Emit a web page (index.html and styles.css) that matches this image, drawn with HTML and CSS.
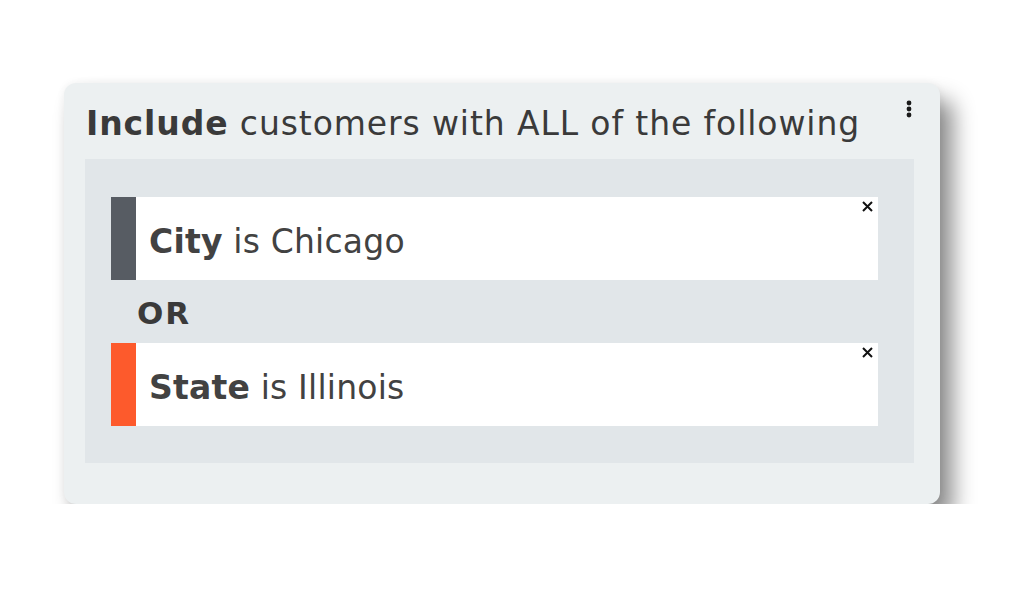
FILE: index.html
```html
<!DOCTYPE html>
<html lang="en">
<head>
    <meta charset="UTF-8">
    <title>Segment Rules</title>
    <link rel="stylesheet" href="styles.css">
</head>
<body>
    <div class="card">
        <div class="card-head">
            <h1 class="title"><b>Include</b> customers with ALL of the following</h1>
            <span class="menu-btn">
                <svg width="6" height="18" viewBox="0 0 6 18"><circle cx="3" cy="3" r="2.4"/><circle cx="3" cy="9" r="2.4"/><circle cx="3" cy="15" r="2.4"/></svg>
            </span>
        </div>

        <div class="group">
            <div class="rule">
                <span class="bar bar-city"></span>
                <p class="rule-text"><b>City</b> is Chicago</p>
                <span class="remove">
                    <svg width="13" height="13" viewBox="0 0 13 13"><path d="M2 2 L11 11 M11 2 L2 11"/></svg>
                </span>
            </div>

            <div class="joiner">OR</div>

            <div class="rule">
                <span class="bar bar-state"></span>
                <p class="rule-text"><b>State</b> is Illinois</p>
                <span class="remove">
                    <svg width="13" height="13" viewBox="0 0 13 13"><path d="M2 2 L11 11 M11 2 L2 11"/></svg>
                </span>
            </div>
        </div>
    </div>
</body>
</html>
```

FILE: styles.css
```css
body {
    margin: 0;
    background-color: #fff;
    font-family: "DejaVu Sans", Arial, sans-serif;
    color: #3b3b3b;
}

.card {
    margin: 83px 0 0 64px;
    width: 876px;
    height: 421px;
    box-sizing: border-box;
    padding: 0 28px 41px 21px;
    background-color: #ecf0f1;
    border-radius: 12px;
    box-shadow: 0 0 8px rgba(0, 0, 0, 0.06), 13px 17px 22px rgba(0, 0, 0, 0.45);
}

.card-head {
    display: flex;
    justify-content: space-between;
    align-items: flex-start;
    height: 76px;
    box-sizing: border-box;
    padding: 21px 0 0 1px;
}

.title {
    margin: 0;
    font-size: 33px;
    line-height: 40px;
    font-weight: 400;
    letter-spacing: 0.9px;
    color: #3a3a3a;
}

.title b, .rule-text b, .joiner {
    font-weight: 700;
}

.menu-btn {
    display: flex;
    margin-top: -4px;
}

.menu-btn svg {
    fill: #1a1a1a;
}

/* Rule group */
.group {
    width: 829px;
    height: 304px;
    box-sizing: border-box;
    padding: 38px 36px 37px 26px;
    background-color: #e1e6e9;
}

.rule {
    display: flex;
    height: 83px;
    background-color: #fff;
}

.bar {
    width: 25px;
    flex-shrink: 0;
}

.bar-city {
    background-color: #575c63;
}

.bar-state {
    background-color: #fd5a2c;
}

.rule-text {
    flex: 1;
    margin: 0;
    padding: 6px 0 0 13px;
    font-size: 33px;
    line-height: 77px;
    letter-spacing: 0.2px;
    color: #424242;
}

.remove {
    display: flex;
    margin: 3px 4px 0 0;
}

.remove svg {
    stroke: #111;
    stroke-width: 2;
    fill: none;
}

.joiner {
    height: 63px;
    box-sizing: border-box;
    padding: 4px 0 0 26px;
    font-size: 31px;
    line-height: 59px;
    letter-spacing: 2px;
    color: #3a3a3a;
}
```
